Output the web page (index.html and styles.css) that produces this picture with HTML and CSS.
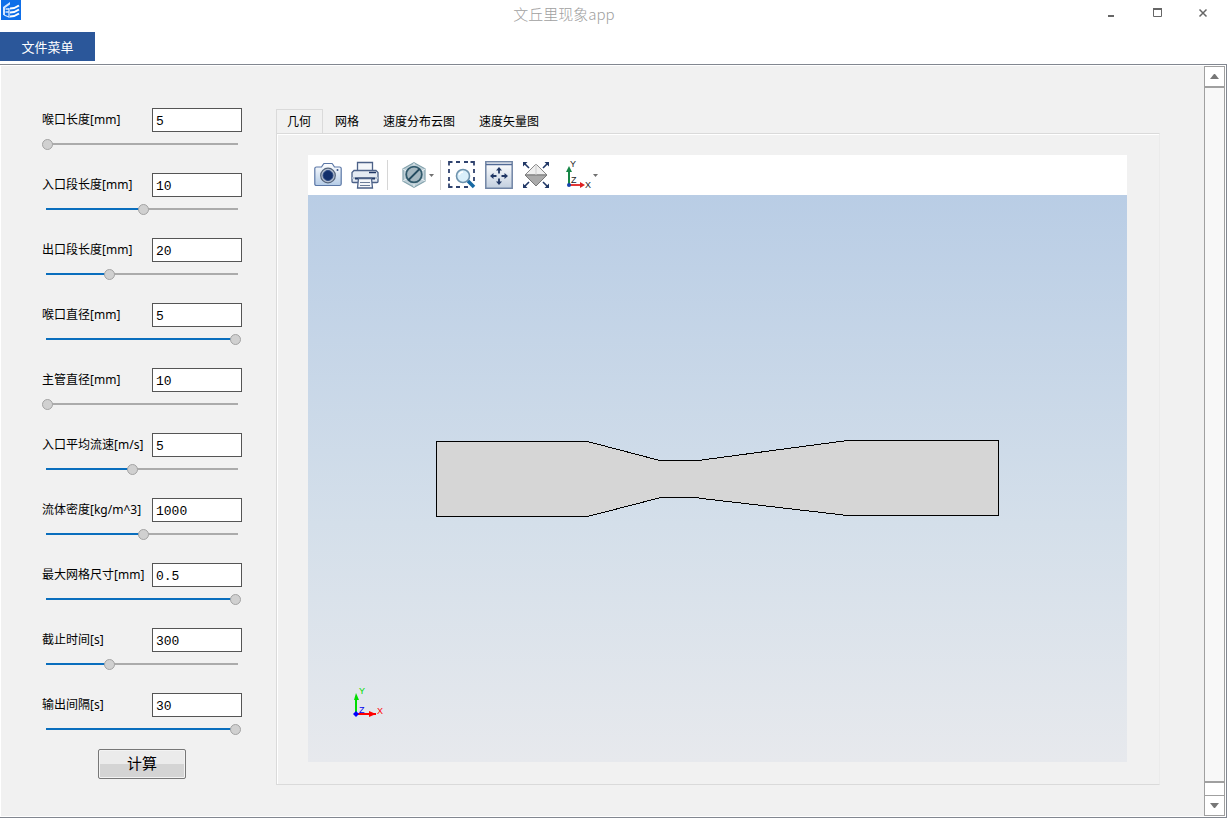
FILE: index.html
```
<!DOCTYPE html>
<html lang="zh-CN">
<head>
<meta charset="utf-8">
<title>文丘里现象app</title>
<link rel="stylesheet" href="styles.css">
</head>
<body>
<header class="titlebar">
  <svg class="logo" width="20" height="20" viewBox="0 0 20 20" aria-hidden="true">
    <rect width="20" height="20" fill="#0f6fe8"/>
    <path d="M2 7 9 2v2.500L4 8v7H2z" fill="#d5e7ff"/>
    <path d="M4.500 9h3M4.500 12h3M3 15l5 2V8" fill="none" stroke="#d5e7ff" stroke-width="1.300"/>
    <path d="M9 8.500q5 0 9-3M9 12.500q5 0 9-3M9 16.500q5 0 9-3" fill="none" stroke="#fff" stroke-width="2"/>
  </svg>
  <h1 class="title">文丘里现象app</h1>
  <div class="window-controls">
    <button aria-label="最小化"><svg width="10" height="10"><path d="M2 7h6v2H2z" fill="#666"/></svg></button>
    <button aria-label="最大化"><svg width="10" height="10"><path d="M1.500 1.500h8v7h-8z" fill="none" stroke="#666"/><path d="M1 1h9" stroke="#666" stroke-width="2"/></svg></button>
    <button aria-label="关闭"><svg width="10" height="10"><path d="M1.500 1.500l7 7m0-7l-7 7" stroke="#666" stroke-width="1.500"/></svg></button>
  </div>
</header>
<nav class="menubar"><button class="menu">文件菜单</button></nav>
<main class="workspace">
  <form class="params">
    <div class="field"><label for="p0">喉口长度[mm]</label><input class="box" id="p0" type="text" value="5"><input class="slider" type="range" aria-label="喉口长度" value="0" style="--fill:0%"></div>
    <div class="field"><label for="p1">入口段长度[mm]</label><input class="box" id="p1" type="text" value="10"><input class="slider" type="range" aria-label="入口段长度" value="51" style="--fill:50%"></div>
    <div class="field"><label for="p2">出口段长度[mm]</label><input class="box" id="p2" type="text" value="20"><input class="slider" type="range" aria-label="出口段长度" value="33" style="--fill:32%"></div>
    <div class="field"><label for="p3">喉口直径[mm]</label><input class="box" id="p3" type="text" value="5"><input class="slider" type="range" aria-label="喉口直径" value="100" style="--fill:95%"></div>
    <div class="field"><label for="p4">主管直径[mm]</label><input class="box" id="p4" type="text" value="10"><input class="slider" type="range" aria-label="主管直径" value="0" style="--fill:0%"></div>
    <div class="field"><label for="p5">入口平均流速[m/s]</label><input class="box" id="p5" type="text" value="5"><input class="slider" type="range" aria-label="入口平均流速" value="45" style="--fill:44%"></div>
    <div class="field"><label for="p6">流体密度[kg/m^3]</label><input class="box" id="p6" type="text" value="1000"><input class="slider" type="range" aria-label="流体密度" value="51" style="--fill:50%"></div>
    <div class="field"><label for="p7">最大网格尺寸[mm]</label><input class="box" id="p7" type="text" value="0.5"><input class="slider" type="range" aria-label="最大网格尺寸" value="100" style="--fill:95%"></div>
    <div class="field"><label for="p8">截止时间[s]</label><input class="box" id="p8" type="text" value="300"><input class="slider" type="range" aria-label="截止时间" value="33" style="--fill:32%"></div>
    <div class="field"><label for="p9">输出间隔[s]</label><input class="box" id="p9" type="text" value="30"><input class="slider" type="range" aria-label="输出间隔" value="100" style="--fill:95%"></div>
    <button class="compute" type="button">计算</button>
  </form>
  <section class="results">
    <div class="tabs" role="tablist">
      <button class="tab active" role="tab" aria-selected="true">几何</button>
      <button class="tab" role="tab">网格</button>
      <button class="tab" role="tab">速度分布云图</button>
      <button class="tab" role="tab">速度矢量图</button>
    </div>
    <div class="panel" role="tabpanel">
      <div class="toolbar">
        <button class="tool camera" aria-label="截图"><svg width="28" height="24" viewBox="0 0 28 24">
          <defs><linearGradient id="cam" x2="0" y2="1"><stop stop-color="#fff"/><stop offset="1" stop-color="#b4cbe6"/></linearGradient></defs>
          <path d="M.8 5.500Q.8 4 2.500 4h5L9.500 1q.3-.5 1-.5h7q.7 0 1 .5l2 3h5q1.700 0 1.700 1.500v15.500q0 1.500-1.700 1.500h-23Q.8 22.500.8 21z" fill="url(#cam)" stroke="#5b77a6" stroke-width="1.200"/>
          <circle cx="14" cy="12.500" r="7.300" fill="#b4bfd0" stroke="#54647c" stroke-width="1.200"/><circle cx="14" cy="12.500" r="5" fill="#122f6b" stroke="#2d4a83"/><circle cx="23.500" cy="7" r="1" fill="#354f82"/></svg></button>
        <button class="tool printer" aria-label="打印"><svg width="28" height="28" viewBox="0 0 28 28">
          <path d="M6.500 10V1.500h15V10" fill="#f3f6fa" stroke="#4c6188" stroke-width="1.300"/>
          <path d="M3 9.500h22l2 2v9q0 1-1 1H2q-1 0-1-1v-9z" fill="#e4eaf2" stroke="#4c6188" stroke-width="1.300"/>
          <path d="M1 17h26" stroke="#b0bdce" stroke-width="2"/><path d="M18 11.500h7" stroke="#203765" stroke-width="1.500"/>
          <path d="M4 17.500h20" stroke="#203765" stroke-width="2"/><path d="M7.500 17.500h13l1 9.500h-15z" fill="#f5f7fa" stroke="#4c6188" stroke-width="1.300"/>
          <path d="M9 21.500h10M9 24.500h10" stroke="#6c7d99"/></svg></button>
        <span class="divider"></span>
        <button class="tool scene" aria-label="透明度"><svg width="32" height="26" viewBox="0 0 32 26">
          <path d="M12 .8l11 6v12.400l-11 6-11-6V6.800z" fill="#c0d0d8" stroke="#83a2ac" stroke-width="1.200"/>
          <path d="M12 1v5m0 14v5M1 7l5 3m12 6l5 3m0-12l-5 3M6 16l-5 3" stroke="#e5eef1"/>
          <circle cx="12" cy="12.500" r="7.800" fill="#a5b7c0" stroke="#315a6c" stroke-width="1.800"/><path d="M17.500 7L6.500 18" stroke="#254c60" stroke-width="1.800"/>
          <path d="M27 12h5l-2.500 3z" fill="#707070"/></svg></button>
        <span class="divider"></span>
        <button class="tool zoombox" aria-label="缩放框"><svg width="28" height="28" viewBox="0 0 28 28">
          <path d="M1 4.500V1h3.500M22.500 1H26v3.500M1 22.500V26h3.500" fill="none" stroke="#2f426e" stroke-width="1.800"/>
          <path d="M8 1h4m4 0h4M1 8v4m0 4v4M26 8v4m0 4v4M8 26h4m4 0h4" stroke="#2f426e" stroke-width="1.800"/>
          <circle cx="15" cy="15" r="6.500" fill="#d9effa" stroke="#6e93ad" stroke-width="1.600"/><path d="M11 14q1-3 4-3" fill="none" stroke="#fff" stroke-width="1.500"/><path d="M20 20l6 6" stroke="#1769a3" stroke-width="3.500"/></svg></button>
        <button class="tool extents" aria-label="缩放到窗口"><svg width="28" height="28" viewBox="0 0 28 28">
          <defs><linearGradient id="win" x2="0" y2="1"><stop stop-color="#fff"/><stop offset="1" stop-color="#c2cfdf"/></linearGradient></defs>
          <path d="M.8.8h26.400v26.400H.8z" fill="url(#win)" stroke="#7185a5" stroke-width="1.500"/><path d="M1 3.500h26" stroke="#526b96" stroke-width="1.500"/>
          <path d="M14 8v4.500M14 17.500V22M7 15h4.500M16.500 15H21" stroke="#203765" stroke-width="1.800"/><path d="M14 6l-3 3.500h6zM14 24l-3-3.500h6zM5 15l3.500-3v6zM23 15l-3.500-3v6z" fill="#203765"/></svg></button>
        <button class="tool fit" aria-label="默认视图"><svg width="28" height="28" viewBox="0 0 28 28">
          <path d="M14 3l11 11H3z" fill="#eee" stroke="#888"/><path d="M3 14h22L14 25z" fill="#aaa" stroke="#777"/><path d="M14 3v11" stroke="#ccc"/>
          <path d="M7 7L2 2M21 7l5-5M7 21l-5 5M21 21l5 5" stroke="#203765" stroke-width="1.600"/><path d="M1 1h4.500L1 5.500zM27 1v4.500L22.500 1zM1 27v-4.500L5.500 27zM27 27h-4.500l4.500-4.500z" fill="#203765"/></svg></button>
        <button class="tool axes" aria-label="视图方向"><svg width="34" height="32" viewBox="0 0 34 32">
          <path d="M4 26V11" stroke="#168646" stroke-width="2"/><path d="M4 7L1 13h6z" fill="#168646"/><path d="M4 26h13" stroke="#e02020" stroke-width="1.800"/><path d="M20 26l-5-3v6z" fill="#e02020"/><circle cx="4" cy="26" r="2" fill="#1543ad"/>
          <text x="5" y="8" class="axis-label">Y</text><text x="6" y="24" class="axis-label">Z</text><text x="20" y="29" class="axis-label">X</text><path d="M28 15h5l-2.500 3z" fill="#707070"/></svg></button>
      </div>
      <svg class="canvas" viewBox="0 0 819 567" role="img" aria-label="文丘里管几何">
        <path class="pipe" d="M128.500 246.500h151L348 264.500q3 1 7 1h35L539.500 245.500h151v75h-151L394 303.500q-4-1-8-1h-30q-4 0-7 1L279.500 321.500h-151z"/>
        <path d="M48 518v-14" stroke="#00dc00" stroke-width="2"/><path d="M48 498l-2 7h5z" fill="#00dc00"/>
        <path d="M48 519h20" stroke="#f00" stroke-width="2"/><path d="M61 516v6l7-3z" fill="#f00"/><path d="M48 516l3 3-3 3-3-3z" fill="#00f"/>
        <g class="triad-label"><text x="51" y="499" fill="#00dc00">Y</text><text x="51" y="518" fill="#0000f0">Z</text><text x="69" y="519" fill="#f00">X</text></g>
      </svg>
    </div>
  </section>
  <div class="scrollbar">
    <button aria-label="向上滚动"><svg width="9" height="5"><path d="M0 5h9L5 0H4z" fill="#777"/></svg></button>
    <div class="thumb"></div>
    <div class="track"></div>
    <button aria-label="向下滚动"><svg width="9" height="5"><path d="M0 0h9L5 5H4z" fill="#777"/></svg></button>
  </div>
</main>
</body>
</html>
```
FILE: styles.css
```
* { box-sizing: border-box; }
body {
  margin: 0;
  min-height: 100vh;
  display: flex;
  flex-direction: column;
  background: #fff;
  color: #000;
  font: 12px/16px "Noto Sans", "Noto Sans CJK SC", sans-serif;
}
button { margin: 0; padding: 0; border: 0; background: none; font: inherit; color: inherit; }
svg { display: block; }

.titlebar { display: grid; grid-template-columns: 1fr auto 1fr; height: 32px; padding: 0 0 0 1px; }
.title {
  margin: 0 101px 0 0;
  color: #a0a0a0;
  font: 300 15px/28px "Noto Sans CJK SC", sans-serif;
}
.window-controls { display: flex; justify-content: flex-end; height: 25px; padding-right: 2px; }
.window-controls button { width: 46px; display: grid; place-items: center; }

.menubar { height: 32px; }
.menu { width: 95px; height: 29px; background: #2b579a; color: #fff; font-size: 13px; }

.workspace {
  flex: 1;
  display: flex;
  margin: 0 1px 1px 0;
  padding: 1px;
  border: solid #828790;
  border-width: 1px 1px 1px 0;
  background: #f1f1f1;
  box-shadow: inset 0 0 0 1px #fff;
}

.params { display: flex; flex-direction: column; gap: 23px; width: 200px; margin: 42px 34px 0 41px; }
.field { display: grid; grid-template-columns: 110px 90px; row-gap: 6px; align-items: center; }
.field label { white-space: nowrap; }
.box {
  width: 90px;
  height: 24px;
  padding: 2px 3px 0;
  border: 1px solid #555;
  border-radius: 0;
  background: #fff;
  font: 13px/20px "Liberation Mono", monospace;
}
.slider {
  grid-column: 1 / -1;
  appearance: none;
  width: 199px;
  height: 12px;
  margin: 0;
  background:
    linear-gradient(#0a6ebd, #0a6ebd) 4px 5px / var(--fill) 2px no-repeat,
    linear-gradient(#ababab, #ababab) 4px 5px / 192px 2px no-repeat;
}
.slider::-webkit-slider-thumb {
  appearance: none;
  width: 11px;
  height: 11px;
  border: 1px solid #a3a3a3;
  border-radius: 50%;
  background: #d0d0d0;
}
.compute {
  align-self: center;
  width: 88px;
  height: 30px;
  margin-top: -9px;
  padding-bottom: 2px;
  border: 1px solid #777;
  border-radius: 2px;
  background: linear-gradient(#ebebeb 50%, #d4d4d4 50%);
  font-size: 15px;
  box-shadow: inset 0 0 0 1px #f3f3f3;
}

.results { flex: 1; display: flex; flex-direction: column; margin: 43px 44px 31px 0; }
.tabs { display: flex; height: 24px; }
.tab { padding: 1px 11px 0 10px; border: 1px solid transparent; border-bottom: 0; white-space: nowrap; }
.tab + .tab { padding-left: 11px; }
.tab.active { border-color: #dadada; }
.panel {
  flex: 1;
  display: flex;
  flex-direction: column;
  padding: 21px 32px 22px 31px;
  border: 1px solid #dadada;
  border-right-color: #ebebeb;
  box-shadow: inset 1px 1px 0 #fff;
}
.toolbar { display: flex; align-items: center; height: 40px; padding-left: 6px; background: #fff; }
.printer { margin-left: 9px; }
.scene { margin-left: 14px; }
.zoombox { margin-left: 7px; }
.extents, .fit { margin-left: 9px; }
.axes { margin-left: 15px; }
.divider { width: 1px; height: 30px; margin-left: 6px; background: #d6d6d6; }
.printer + .divider { margin-left: 8px; }
.axis-label { font: 9px "Liberation Sans", sans-serif; fill: #222; }
.canvas { flex: 1 1 0; width: 100%; min-height: 0; background: linear-gradient(#b9cde5, #d4dfea 58%, #e7e9ed); }
.pipe { fill: #d6d6d6; stroke: #000; shape-rendering: crispEdges; }
.triad-label { font: 9px "Liberation Sans", sans-serif; }

.scrollbar { display: flex; flex-direction: column; width: 21px; background: #fff; }
.scrollbar button { height: 21px; border: 1px solid #a0a0a0; display: grid; place-items: center; }
.thumb { flex: 1; border: 1px solid #a0a0a0; background: #f8f8f8; }
.track { height: 13px; border: solid #a0a0a0; border-width: 1px 1px 0; }
```
